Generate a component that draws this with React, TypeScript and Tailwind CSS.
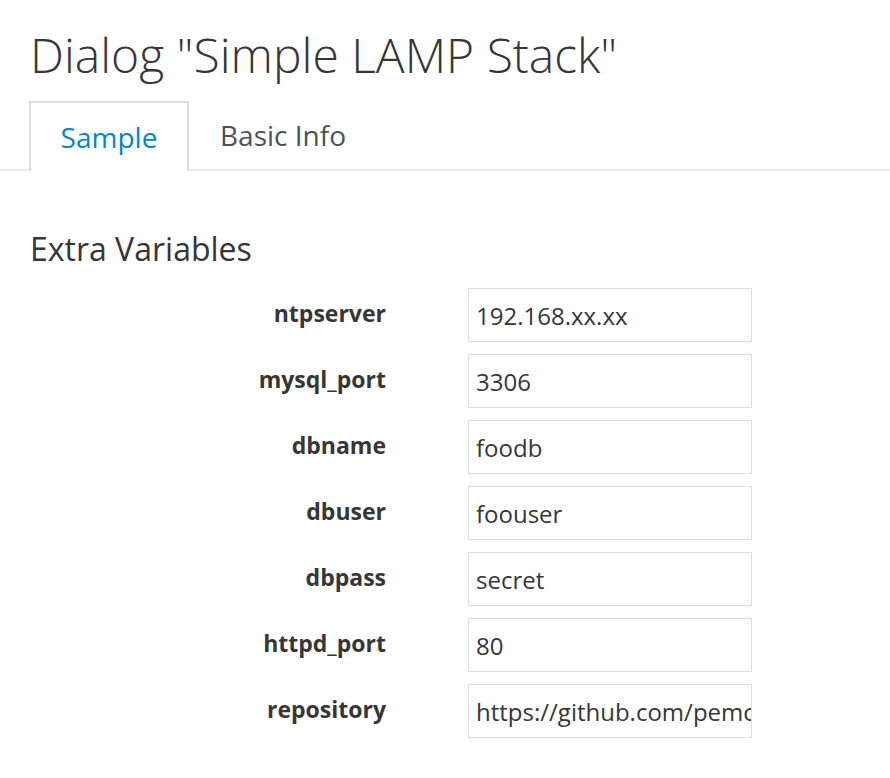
import React from "react";

const rows: [string, string][] = [
  ["ntpserver", "192.168.xx.xx"],
  ["mysql_port", "3306"],
  ["dbname", "foodb"],
  ["dbuser", "foouser"],
  ["dbpass", "secret"],
  ["httpd_port", "80"],
  ["repository", "https://github.com/pemcg/lamp_simple.git"],
];

export default function App() {
  return (
    <div
      className="w-[890px] h-[778px] bg-white text-[#363636] overflow-hidden"
      style={{ fontFamily: '"Open Sans", sans-serif' }}
    >
      <h1 className="pl-[30px] pt-[25px] text-[48px] leading-[60px] font-light text-[#363636]">
        Dialog "Simple LAMP Stack"
      </h1>
      <div className="mt-[16px] flex border-b-2 border-[#ededed] pl-[29px]">
        <div className="-mb-[2px] flex h-[70px] w-[160px] items-center justify-center border-2 border-b-0 border-[#dddddd] bg-white text-[28px] text-[#0088ce]">
          Sample
        </div>
        <div className="flex h-[68px] items-center pl-[31px] pb-[0px] text-[28px] text-[#4d5258]">
          Basic Info
        </div>
      </div>
      <h2 className="pl-[30px] pt-[56px] text-[32px] leading-[44px] text-[#363636]">
        Extra Variables
      </h2>
      <div className="mt-[17px] flex flex-col gap-[12px]">
        {rows.map(([label, value]) => (
          <div key={label} className="flex items-center">
            <label className="w-[386px] pb-[4px] text-right text-[23px] font-bold text-[#363636]">
              {label}
            </label>
            <input
              readOnly
              value={value}
              className="ml-[82px] h-[54px] w-[284px] border border-[#dddddd] pl-[7px] text-[24px] text-[#363636] outline-none"
              style={{ fontFamily: '"Open Sans", sans-serif' }}
            />
          </div>
        ))}
      </div>
    </div>
  );
}
